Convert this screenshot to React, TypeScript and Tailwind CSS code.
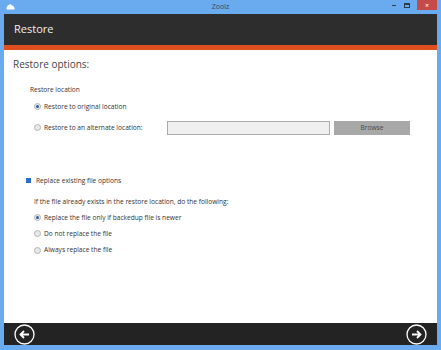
import React from "react"

function Radio({ checked }: { checked?: boolean }) {
  return (
    <span className="flex h-[7px] w-[7px] items-center justify-center rounded-full border border-[#b5b5b5] bg-[#e8e8e8]">
      {checked && <span className="h-[3px] w-[3px] rounded-full bg-[#2a5d9c]" />}
    </span>
  )
}

function Option({ label, checked }: { label: string; checked?: boolean }) {
  return (
    <div className="flex items-center gap-[3px]">
      <Radio checked={checked} />
      <span>{label}</span>
    </div>
  )
}

function ArrowButton({ dir }: { dir: "left" | "right" }) {
  return (
    <svg width="21" height="21" viewBox="0 0 21 21" fill="none" stroke="white">
      <circle cx="10.5" cy="10.5" r="9.5" strokeWidth="1.3" />
      {dir === "left" ? (
        <path d="M15 10.5H6.5M10 7l-3.5 3.5L10 14" strokeWidth="1.8" />
      ) : (
        <path d="M6 10.5h8.5M11 7l3.5 3.5L11 14" strokeWidth="1.8" />
      )}
    </svg>
  )
}

export default function App() {
  return (
    <div
      className="flex h-[350px] w-[441px] flex-col bg-[#6aabf0] px-[4px] pb-[5px]"
      style={{ fontFamily: "'Open Sans', 'Noto Sans', sans-serif" }}
    >
      {/* Title bar */}
      <div className="relative flex h-[14px] items-center justify-center text-[7px] text-[#3a4a5c]">
        <svg className="absolute left-[2px] top-[3px]" width="9" height="7" viewBox="0 0 9 7">
          <path d="M1 6.5h7c.8 0 1-1.2.3-1.6C8 3 6.8 2.5 6 2.8 5.6 1.2 3.7.8 2.8 2 2 1.9 1.2 2.6 1.4 3.8.4 4.2.3 6.5 1 6.5z" fill="white" />
        </svg>
        <span>Zoolz</span>
        <div className="absolute right-[0px] top-0 flex items-start">
          <span className="mr-[8px] mt-[5px] h-[1px] w-[4px] bg-[#2d3a4a]" />
          <span className="mr-[7px] mt-[3px] h-[5px] w-[6px] border border-t-2 border-[#2d3a4a]" />
          <span className="flex h-[10px] w-[20px] items-center justify-center bg-[#c74a4a] text-[7px] leading-none text-white">
            ×
          </span>
        </div>
      </div>

      {/* Header */}
      <div className="flex h-[31px] items-center bg-[#2d2d2d] pl-[10px] text-[11px] text-[#f0f0f0]">
        Restore
      </div>
      <div className="h-[5px] bg-[#df4f1f]" />

      {/* Content */}
      <div className="flex flex-1 flex-col bg-white pl-[9px] text-[6.6px] text-[#333]">
        <div className="mt-[7px] text-[10px] text-[#444]">Restore options:</div>

        <div className="mt-[13px] pl-[17px]">Restore location</div>
        <div className="mt-[7px] pl-[21px]">
          <Option label="Restore to original location" checked />
        </div>
        <div className="mt-[9px] flex items-center pl-[21px]">
          <div className="w-[133px]">
            <Option label="Restore to an alternate location:" />
          </div>
          <div className="h-[14px] w-[163px] border border-[#ababab] bg-[#f0f0f0]" />
          <div className="ml-[4px] flex h-[14px] w-[76px] items-center justify-center bg-[#a8a8a8] text-[#4a4a4a]">
            Browse
          </div>
        </div>

        <div className="mt-[41px] flex items-center gap-[5px] pl-[13px]">
          <span className="h-[5px] w-[5px] bg-[#2a6cc8]" />
          <span>Replace existing file options</span>
        </div>
        <div className="mt-[11px] pl-[21px]">If the file already exists in the restore location, do the following:</div>
        <div className="mt-[6px] flex flex-col gap-[6.5px] pl-[21px]">
          <Option label="Replace the file only if backedup file is newer" checked />
          <Option label="Do not replace the file" />
          <Option label="Always replace the file" />
        </div>
      </div>

      {/* Footer */}
      <div className="flex h-[22px] items-center justify-between bg-[#232323] px-[10px]">
        <ArrowButton dir="left" />
        <ArrowButton dir="right" />
      </div>
    </div>
  )
}
